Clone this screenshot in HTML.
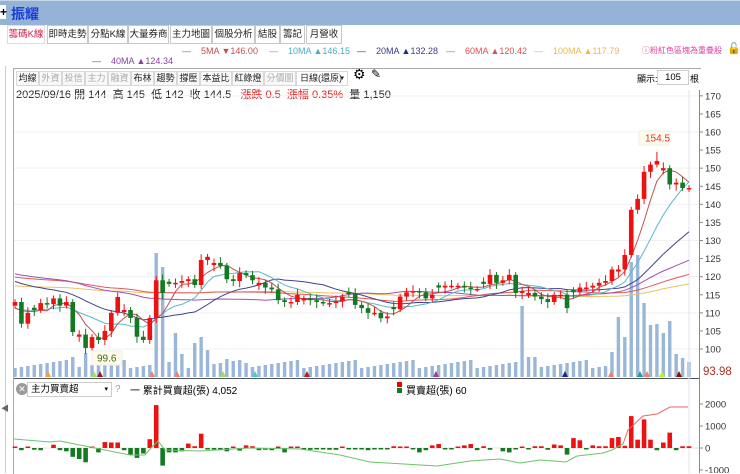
<!DOCTYPE html>
<html><head><meta charset="utf-8"><style>
body{margin:0;width:740px;height:473px;overflow:hidden;background:#fff;font-family:"Liberation Sans","Noto Sans CJK TC",sans-serif;position:relative}
.t{position:absolute;white-space:nowrap}
#title{position:absolute;left:0;top:0;width:740px;height:24px;background:#95b3d7;border-top:1px solid #c8d6e8}
.tab{position:absolute;top:25px;height:17px;border:1px solid #c8c8c8;font-size:9.5px;line-height:17px;color:#222;background:#fff;text-align:center;white-space:nowrap;overflow:hidden;box-sizing:border-box;height:19px}
.tb{position:absolute;top:71px;height:13px;border:1px solid #d8d8d8;font-size:9px;line-height:13px;color:#222;background:#f8f8f8;text-align:center;white-space:nowrap;overflow:hidden;box-sizing:border-box;height:15px}
.tb.g{color:#aaa}
.lg{position:absolute;white-space:nowrap;font-size:9px;top:46px}
</style></head><body>
<div id="title"></div>
<div class="t" style="left:0;top:5px;font-size:12px;font-weight:bold;background:#fff;width:6px;height:14px;line-height:14px">+</div>
<div class="t" style="left:11px;top:4px;font-size:14px;color:#1a3fd8;font-weight:bold">振耀</div>
<div class="tab" style="left:7px;width:38px;color:#d0204a;border-color:#ddd">籌碼K線</div>
<div class="tab" style="left:47px;width:41px">即時走勢</div>
<div class="tab" style="left:88px;width:40px">分點K線</div>
<div class="tab" style="left:128px;width:41px">大量券商</div>
<div class="tab" style="left:170px;width:42px">主力地圖</div>
<div class="tab" style="left:212px;width:43px">個股分析</div>
<div class="tab" style="left:255px;width:25px">結股</div>
<div class="tab" style="left:280px;width:25px">籌記</div>
<div class="tab" style="left:306px;width:36px">月營收</div>

<div class="lg" style="left:182px;color:#c0504d">—&nbsp;&nbsp;&nbsp;&nbsp;5MA ▼146.00</div>
<div class="lg" style="left:269px;color:#4bacc6">—&nbsp;&nbsp;&nbsp;&nbsp;10MA ▲146.15</div>
<div class="lg" style="left:357px;color:#3a3a8a">—&nbsp;&nbsp;&nbsp;&nbsp;20MA <span style="color:#1f2a80">▲</span>132.28</div>
<div class="lg" style="left:446px;color:#e05050">—&nbsp;&nbsp;&nbsp;&nbsp;60MA ▲120.42</div>
<div class="lg" style="left:534px;color:#eab850">—&nbsp;&nbsp;&nbsp;&nbsp;100MA ▲117.79</div>
<div class="t" style="left:642px;top:45px;font-size:8px;color:#e040a0">ⓘ粉紅色區塊為重疊股</div>
<div class="t" style="left:727px;top:42px;font-size:11px">🔓</div>
<div class="lg" style="left:92px;top:56px;color:#8e3fa0">—&nbsp;&nbsp;&nbsp;&nbsp;40MA ▲124.34</div>

<div style="position:absolute;left:5px;top:66px;width:1px;height:407px;background:#ccc"></div>
<div style="position:absolute;left:13px;top:68px;width:687px;height:405px;border-left:1px solid #aaa;border-top:1px solid #aaa"></div>
<div class="tb" style="left:16px;width:23px">均線</div><div class="tb g" style="left:39px;width:23px">外資</div><div class="tb g" style="left:62px;width:23px">投信</div><div class="tb g" style="left:85px;width:23px">主力</div><div class="tb g" style="left:108px;width:23px">融資</div><div class="tb" style="left:131px;width:23px">布林</div><div class="tb" style="left:154px;width:23px">趨勢</div><div class="tb" style="left:177px;width:23px">撐壓</div><div class="tb" style="left:200px;width:32px">本益比</div><div class="tb" style="left:232px;width:32px">紅綠燈</div><div class="tb g" style="left:264px;width:32px">分價圖</div>
<div class="tb" style="left:296px;width:52px;background:#fff;text-align:left;padding-left:3px">日線(還原)<span style="position:absolute;right:3px;font-size:7px">▾</span></div>
<div class="t" style="left:353px;top:66px;font-size:14px">⚙</div>
<div class="t" style="left:371px;top:67px;font-size:12px">✎</div>
<div class="t" style="left:637px;top:72px;font-size:9px">顯示:</div>
<div style="position:absolute;left:657px;top:70px;width:30px;height:13px;border:1px solid #ccc;font-size:9.5px;text-align:center;line-height:13px">105</div>
<div class="t" style="left:690px;top:72px;font-size:9px">根</div>
<div class="t" style="left:16px;top:86px;font-size:11px;color:#222">2025/09/16 開 144&nbsp; 高 145&nbsp; 低 142&nbsp; 收 144.5&nbsp;&nbsp; <span style="color:#e02020">漲跌 0.5&nbsp; 漲幅 0.35%</span>&nbsp; 量 1,150</div>

<svg id="s" width="740" height="473" style="position:absolute;left:0;top:0">
</svg>
<div class="t" style="left:703px;top:366px;font-size:11.5px;color:#b03020">93.98</div>
<div style="position:absolute;left:16px;top:383px;width:12px;height:12px;border-radius:6px;background:#999;color:#fff;font-size:9px;line-height:12px;text-align:center">✕</div>
<div style="position:absolute;left:27px;top:382px;width:80px;height:13px;border:1px solid #ccc;font-size:9.5px;line-height:13px;padding-left:3px">主力買賣超<span style="float:right;padding-right:3px;font-size:7px">▾</span></div>
<div class="t" style="left:115px;top:384px;font-size:10px;color:#8aa">?</div>
<div class="t" style="left:130px;top:382px;font-size:10px">一 累計買賣超(張) 4,052</div>
<div style="position:absolute;left:397px;top:382px;width:5px;height:5px;background:#e00"></div>
<div style="position:absolute;left:397px;top:388px;width:5px;height:5px;background:#0a7d20"></div>
<div class="t" style="left:406px;top:382px;font-size:10px">買賣超(張) 60</div>
<div class="t" style="left:1px;top:403px;font-size:8px;color:#666">◀</div>
<script>
var C=[113,107,110,110.8,112.7,112.4,114,112,113,104.7,104,100.3,103.3,102.5,105,110,114.4,110.8,108.6,103.4,102.5,108.6,119,115.5,118,118.3,118.8,119.3,117.7,124.6,125.5,123.8,123,119.3,118.8,121,120.4,119,118.3,117,116.5,113.5,113,113,115,114,113.5,113,112.7,112.7,113.2,114.4,115.2,112.2,111.3,
110,110,108.5,109,111,114.5,115.7,116,115.7,114,115,117,117.5,117.5,117.5,117,116.6,116.6,118,120.5,118.3,119,120.5,115.5,116,115.5,114.5,113.8,113,115,115,111.3,115.7,117,117,117.5,118.3,118.8,122,122,126,138.5,141.5,149,151,152,150,145.5,146,144.5,144.5];
var N=C.length,st=674/(N-1);
function X(i){return 15+i*st}
function Y(p){return 132+(160-p)*3.617}
var h='';
for(var p=100;p<=170;p+=10)h+='<line x1="14" x2="699" y1="'+Y(p)+'" y2="'+Y(p)+'" stroke="#f0f0f0"/>';
for(var p=100;p<=170;p+=5)h+='<line x1="700" x2="703" y1="'+Y(p)+'" y2="'+Y(p)+'" stroke="#888"/><text x="705" y="'+(Y(p)+3.5)+'" font-size="9.5" fill="#333">'+p+'</text>';
var V=[];for(var i=0;i<N;i++)V[i]=9+((i*37)%9);
var big={9:20,11:24,15:22,16:25,22:124,23:110,25:44,26:23,28:34,29:40,30:27,33:18,36:14,79:71,80:20,81:20,93:25,94:60,95:40,96:115,97:122,98:74,99:52,100:53,101:44,102:56,103:23,104:19,105:15};
for(var k in big)V[k]=big[k];
for(var i=0;i<N;i++){var x=X(i);h+='<rect x="'+(x-1.7)+'" y="'+(377-V[i])+'" width="3.4" height="'+V[i]+'" fill="#9ab7d8"/>';}
h+='<line x1="14" x2="700" y1="378.5" y2="378.5" stroke="#555"/><line x1="689" x2="689" y1="90" y2="473" stroke="#dde6f2"/>';
h+='<line x1="699.5" x2="699.5" y1="90" y2="473" stroke="#888"/>';
var tri=[[48,'#f0a040'],[94,'#a0e060'],[100,'#a02020'],[152,'#f08070'],[177,'#f08070'],[223,'#a0e060'],[255,'#40d0d0'],[307,'#c02020'],[436,'#a02020'],[436,'#a0e060'],[565,'#1f2a80'],[436,'#a040a0'],[611,'#f08070'],[640,'#20a0a0'],[647,'#f08070'],[662,'#b0f040'],[679,'#901010']];
tri.forEach(function(t){h+='<polygon points="'+(t[0]-3)+',377 '+(t[0]+3)+',377 '+t[0]+',371" fill="'+t[1]+'"/>';});
function ma(n,col,pad){var pts=[];for(var i=0;i<N;i++){var s=0;for(var j=i-n+1;j<=i;j++)s+=(j<0?pad:C[j]);pts.push(X(i).toFixed(1)+','+Y(s/n).toFixed(1));}h+='<polyline points="'+pts.join(' ')+'" fill="none" stroke="'+col+'" stroke-width="1"/>';}
ma(100,'#f0c060',117.5);ma(60,'#e05a5a',120);ma(40,'#a050b0',121);ma(20,'#404090',119);ma(10,'#5ab8c8',111);ma(5,'#c05050',111);
for(var i=0;i<N;i++){var c=C[i],o=i?C[i-1]:112;if(i%7==3)o=c+(c>o?1:-1)*0.6;var up=c>=o;var col=up?'#ee1111':'#137a22';var hi=Math.max(o,c)+0.8+(i%3)*0.4,lo=Math.min(o,c)-0.8-(i%4)*0.3;if(i==100){hi=154.5}var x=X(i);
h+='<line x1="'+x+'" x2="'+x+'" y1="'+Y(hi)+'" y2="'+Y(lo)+'" stroke="'+col+'"/>';var t=Y(Math.max(o,c)),b=Y(Math.min(o,c));h+='<rect x="'+(x-2.3)+'" y="'+t+'" width="4.6" height="'+Math.max(1.5,b-t)+'" fill="'+col+'"/>';}
h+='<rect x="639" y="131" width="30" height="14" fill="#fffbe8" stroke="#eee"/><text x="645" y="141.5" font-size="10" fill="#e03030">154.5</text>';
h+='<rect x="92" y="351" width="30" height="14" fill="#fffbe8" stroke="#eee"/><text x="97" y="361.5" font-size="10" fill="#3a6a20">99.6</text>';
var Z=448;
[[2000,404],[1000,426],[0,448],[-1000,470]].forEach(function(a){h+='<line x1="700" x2="703" y1="'+a[1]+'" y2="'+a[1]+'" stroke="#888"/><text x="705" y="'+(a[1]+3.5)+'" font-size="9.5" fill="#333">'+a[0]+'</text>';});
h+='<line x1="14" x2="699" y1="448" y2="448" stroke="#f6dcdc"/>';
var B=[50,-100,30,-80,-100,0,150,-100,-150,-400,-500,-650,30,-200,270,250,250,-100,-300,-450,-250,400,1950,-800,-200,-200,-150,200,80,650,-20,-50,-40,-150,30,-120,120,80,-100,-80,-100,30,-200,10,20,-80,-80,-60,-30,-80,-80,30,-60,-60,-20,-100,-60,-60,-60,80,60,30,-20,-200,-100,120,180,-10,-20,20,120,180,-100,80,-80,0,-150,-200,-30,40,-30,80,80,-80,160,120,-300,450,350,-60,120,80,80,450,500,100,1450,380,1300,380,-100,250,700,-100,80,80];
for(var i=0;i<N;i++){var v=B[i]||0;var x=X(i);var hh=Math.abs(v)*0.022;if(hh<1.5)hh=1.5;if(v==0)continue;h+='<rect x="'+(x-2.3)+'" y="'+(v>0?Z-hh:Z)+'" width="4.6" height="'+hh+'" fill="'+(v>0?'#ee1111':'#137a22')+'"/>';}
h+='<polyline fill="none" stroke="#6cc46c" stroke-width="1" points="14,439 50,442 60,441 100,449 130,455 145,455 152,447 158,441 165,450 200,451 250,448 300,449 340,455 370,462 437,466 470,461 500,459 520,463 540,460 566,462 577,456 603,453 612,450 623,444"/>';
h+='<polyline fill="none" stroke="#e86a6a" stroke-width="1" points="623,444 628,430 643,416 657,414 670,407 688,407"/>';
document.getElementById('s').innerHTML=h;
</script>
</body></html>
